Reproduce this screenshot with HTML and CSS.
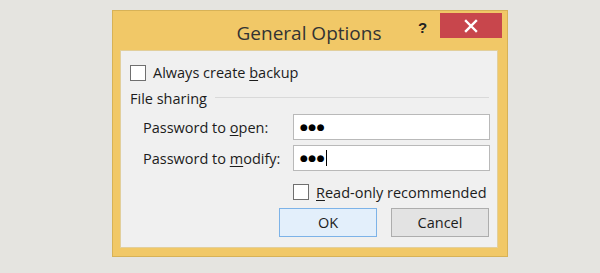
FILE: index.html
```html
<!DOCTYPE html>
<html>
<head>
<meta charset="utf-8">
<link rel="stylesheet" href="styles.css">
</head>
<body>
<div class="window">
  <div class="titlebar">
    <div class="title">General Options</div>
    <div class="help">?</div>
    <div class="close">
      <svg width="14" height="14" viewBox="0 0 14 14"><path d="M2 2 L12 12 M12 2 L2 12" stroke="#fff" stroke-width="2.4" stroke-linecap="square"/></svg>
    </div>
  </div>
  <div class="panel">
    <label class="check-row first">
      <span class="box"></span>
      <span>Always create <u>b</u>ackup</span>
    </label>
    <div class="group">
      <span class="group-title">File sharing</span>
      <span class="group-line"></span>
    </div>
    <div class="fields">
      <span class="label">Password to <u>o</u>pen:</span>
      <span class="input"><span class="dots">●●●</span></span>
      <span class="label">Password to <u>m</u>odify:</span>
      <span class="input"><span class="dots">●●●</span><span class="caret"></span></span>
    </div>
    <label class="check-row readonly">
      <span class="box"></span>
      <span><u>R</u>ead-only recommended</span>
    </label>
    <div class="buttons">
      <button class="btn ok">OK</button>
      <button class="btn cancel">Cancel</button>
    </div>
  </div>
</div>
</body>
</html>
```

FILE: styles.css
```css
html, body {
  margin: 0;
  padding: 0;
}
body {
  background: #e5e4e0;
  width: 600px;
  height: 273px;
  font-family: "Open Sans", "Noto Sans", sans-serif;
  color: #1c1c1c;
  padding-top: 10px;
  padding-left: 112px;
  box-sizing: border-box;
}
.window {
  width: 396px;
  height: 247px;
  box-sizing: border-box;
  background: #f1c867;
  border: 1px solid #d7b257;
  padding: 0 9px 8px 7px;
  display: flex;
  flex-direction: column;
}
.titlebar {
  height: 39px;
  position: relative;
  display: flex;
  justify-content: center;
}
.title {
  font-size: 19px;
  color: #333;
  padding-top: 10px;
  line-height: 24px;
}
.help {
  position: absolute;
  left: 298px;
  top: 8px;
  font-weight: bold;
  font-size: 15px;
  color: #222;
  font-family: "Liberation Sans", sans-serif;
}
.close {
  position: absolute;
  left: 320px;
  top: 2px;
  width: 62px;
  height: 25px;
  background: #c8464c;
  display: flex;
  align-items: center;
  justify-content: center;
}
.panel {
  flex: 1;
  background: #f0f0f0;
  border: 1px solid #e2cf9c;
  padding: 13px 8px 0 9px;
  display: flex;
  flex-direction: column;
}
.check-row {
  display: flex;
  align-items: center;
  gap: 7px;
  font-size: 14.5px;
  height: 17px;
}
.box {
  width: 14px;
  height: 14px;
  border: 1.5px solid #6f6f6f;
  background: #fff;
  flex: none;
}
.group {
  display: flex;
  align-items: center;
  gap: 8px;
  margin-top: 8px;
  height: 18px;
  font-size: 14.5px;
}
.group-line {
  flex: 1;
  height: 1px;
  background: #d9d9d9;
  margin-top: -2px;
}
.fields {
  display: grid;
  grid-template-columns: 150px 197px;
  grid-auto-rows: 26px;
  row-gap: 5px;
  padding-left: 13px;
  margin-top: 7px;
  align-items: center;
  font-size: 14.5px;
}
.input {
  height: 26px;
  box-sizing: border-box;
  background: #fff;
  border: 1px solid #b9b9b9;
  display: flex;
  align-items: center;
  padding-left: 6px;
}
.dots {
  font-size: 9px;
  letter-spacing: 0.5px;
  color: #000;
  font-family: "DejaVu Sans", sans-serif;
}
.caret {
  width: 1px;
  height: 16px;
  background: #000;
  margin-left: 1px;
}
.readonly {
  margin-top: 12px;
  margin-left: 163px;
  height: 18px;
}
.buttons {
  display: flex;
  justify-content: flex-end;
  gap: 14px;
  margin-top: 7px;
}
.btn {
  width: 98px;
  height: 29px;
  font-family: inherit;
  font-size: 14.5px;
  color: #1c1c1c;
  padding: 0;
}
.ok {
  background: #e3effb;
  border: 1px solid #7db3e8;
}
.cancel {
  background: #e3e3e3;
  border: 1px solid #adadad;
}
u {
  text-decoration-thickness: 1px;
  text-underline-offset: 2px;
}
```
